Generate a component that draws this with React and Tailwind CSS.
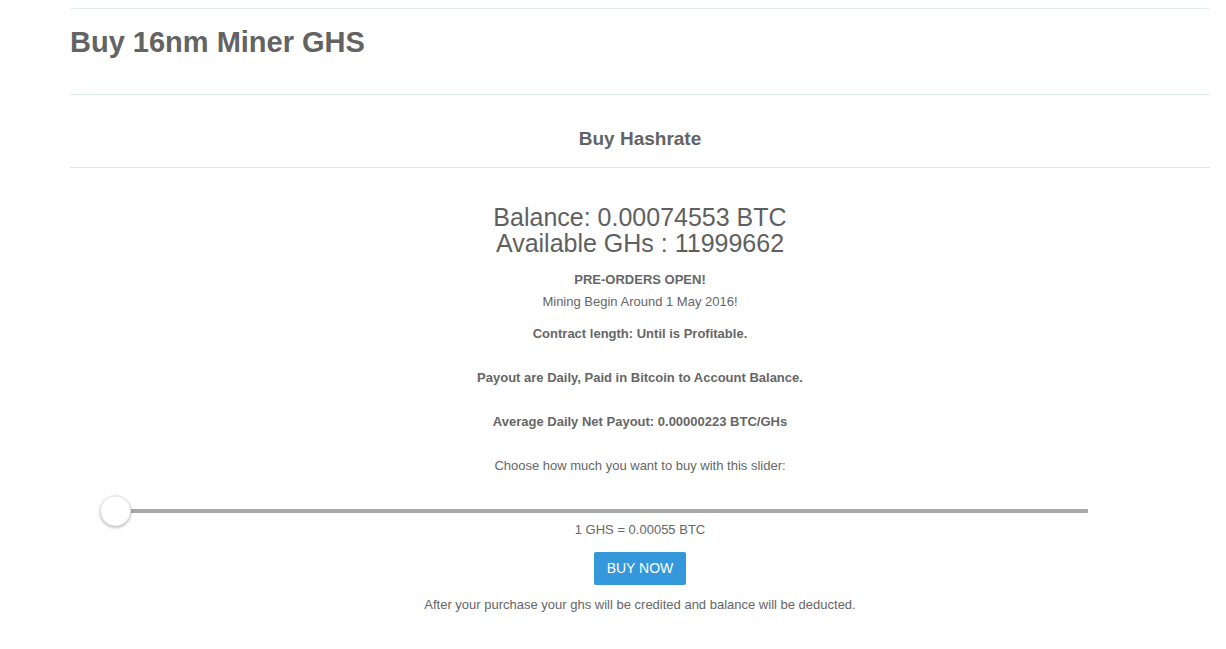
import React from 'react';

export default function App() {
  return (
    <div className="min-h-screen bg-white text-[#666] font-['Liberation_Sans',Arial,sans-serif]">
      <div className="ml-[70px] w-[1140px] pt-[8px]">
        <div className="border-t border-[#ddeeec]" />
        <h1 className="mt-[17px] text-[29px] leading-[32px] font-bold text-[#636363]">Buy 16nm Miner GHS</h1>
        <div className="mt-[36px] border-t border-[#ddeeec]" />
        <h2 className="mt-[33px] text-center text-[19px] leading-[21px] font-bold text-[#636363]">Buy Hashrate</h2>
        <div className="mt-[18px] border-t border-[#e5e5e5]" />

        <div className="mt-[36px] text-center text-[25px] leading-[26px] text-[#5f5f5f]">
          <div>Balance: 0.00074553 BTC</div>
          <div>Available GHs : 11999662</div>
        </div>

        <div className="text-center text-[13px] leading-[20px]">
          <div className="mt-[14px] font-bold">PRE-ORDERS OPEN!</div>
          <div className="mt-[2px]">Mining Begin Around 1 May 2016!</div>
          <div className="mt-[12px] font-bold">Contract length: Until is Profitable.</div>
          <div className="mt-[24px] font-bold">Payout are Daily, Paid in Bitcoin to Account Balance.</div>
          <div className="mt-[24px] font-bold">Average Daily Net Payout: 0.00000223 BTC/GHs</div>
          <div className="mt-[24px]">Choose how much you want to buy with this slider:</div>
        </div>

        <div className="mt-[31px] ml-[30px] w-[988px] h-[8px] flex items-center relative">
          <div className="w-full h-[4px] bg-[#a6a8aa] rounded-[1px]" />
          <div className="absolute left-0 top-1/2 -translate-y-1/2 w-[31px] h-[31px] rounded-full bg-white border border-[#e6e6e6] shadow-[0_1px_3px_rgba(0,0,0,0.3)]" />
        </div>

        <div className="mt-[5px] text-center text-[13px] leading-[20px]">1 GHS = 0.00055 BTC</div>

        <div className="mt-[12px] flex justify-center">
          <button className="w-[92px] h-[33px] leading-[33px] bg-[#3498db] text-white text-[14px] rounded-[2px]">BUY NOW</button>
        </div>

        <div className="mt-[10px] text-center text-[13px] leading-[20px]">After your purchase your ghs will be credited and balance will be deducted.</div>
      </div>
    </div>
  );
}
